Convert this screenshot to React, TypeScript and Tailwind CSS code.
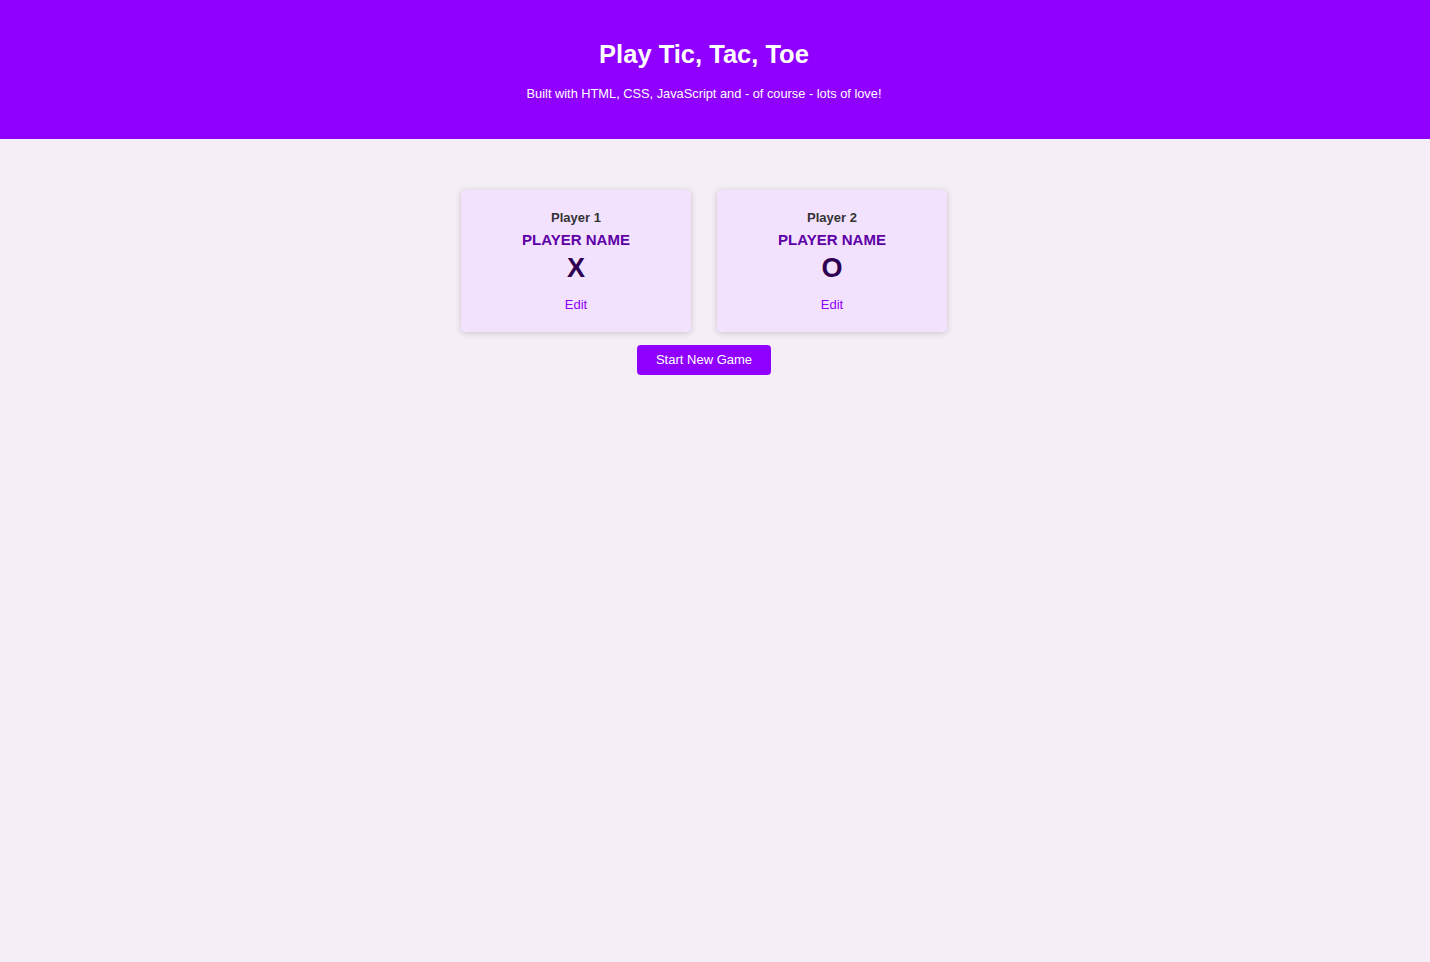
import React from 'react';

type Player = { label: string; name: string; symbol: string };

const players: Player[] = [
  { label: 'Player 1', name: 'PLAYER NAME', symbol: 'X' },
  { label: 'Player 2', name: 'PLAYER NAME', symbol: 'O' },
];

const PlayerCard: React.FC<{ player: Player }> = ({ player }) => (
  <li className="w-[230px] h-[142px] bg-[#f3e2fe] rounded-[4px] shadow-[0_1px_6px_rgba(0,0,0,0.18)] flex flex-col items-center pt-[19px]">
    <h2 className="text-[13px] leading-[18px] font-bold text-[#333]">{player.label}</h2>
    <h3 className="mt-[3px] text-[15px] leading-[20px] font-bold text-[#5c00a6]">{player.name}</h3>
    <p className="mt-[2px] text-[27px] leading-[32px] font-bold text-[#2d0052]">{player.symbol}</p>
    <button className="mt-[12px] text-[13px] leading-[18px] text-[#9000ff]">Edit</button>
  </li>
);

const App: React.FC = () => {
  return (
    <div className="min-h-screen bg-[#f5eef6] font-['Liberation_Sans',Arial,sans-serif]">
      <header className="bg-[#9000ff] h-[139px] pr-[22px] flex flex-col items-center text-white">
        <h1 className="mt-[37px] text-[25.5px] leading-[34px] font-bold">Play Tic, Tac, Toe</h1>
        <p className="mt-[15px] text-[12.8px] leading-[16px]">Built with HTML, CSS, JavaScript and - of course - lots of love!</p>
      </header>
      <main className="pr-[22px] flex flex-col items-center pt-[51px]">
        <ul className="flex gap-[26px]">
          {players.map((p) => (
            <PlayerCard key={p.label} player={p} />
          ))}
        </ul>
        <button className="mt-[13px] w-[134px] h-[30px] rounded-[4px] bg-[#9000ff] text-white text-[13px]">
          Start New Game
        </button>
      </main>
    </div>
  );
};

export default App;
